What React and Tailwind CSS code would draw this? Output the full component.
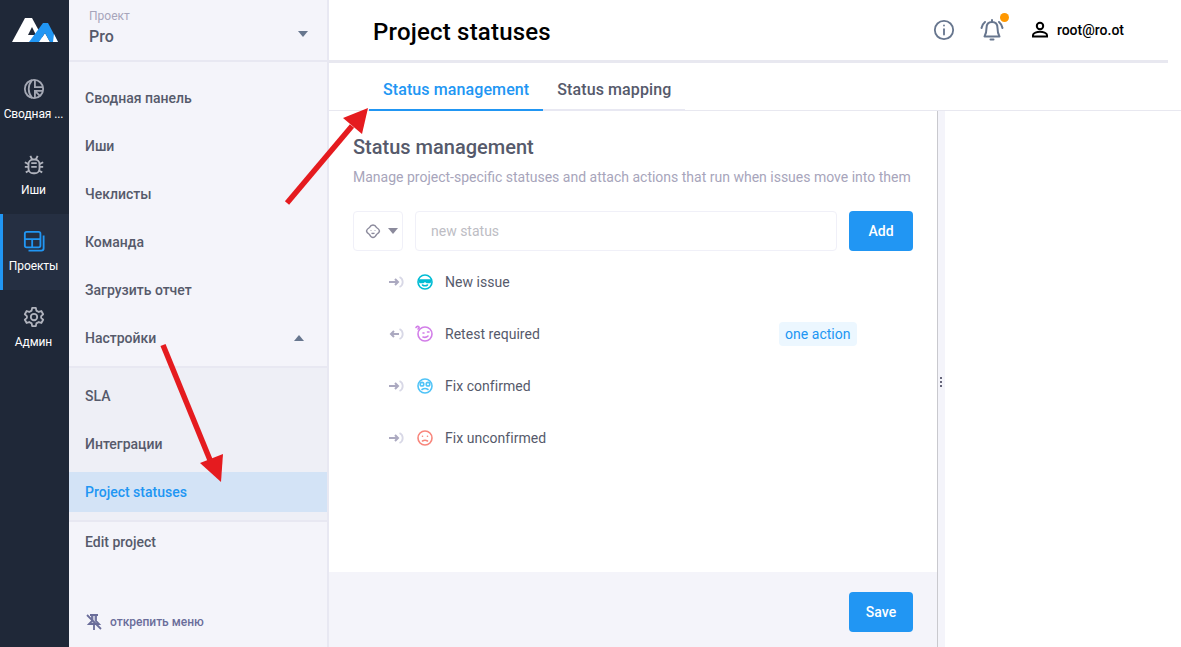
const font = { fontFamily: "Roboto, sans-serif" };

function Caret({ up, className }) {
  return (
    <svg width="10" height="6" viewBox="0 0 10 6" className={className}>
      <path d={up ? "M0 6 L5 0 L10 6 Z" : "M0 0 L10 0 L5 6 Z"} fill="currentColor" />
    </svg>
  );
}

function Logo() {
  return (
    <svg width="46" height="24" viewBox="0 0 46 24">
      <path d="M0 24 L13 0 H20 L33 24 Z" fill="#fff" />
      <path d="M20 9 L24 17 H16 Z" fill="#1f2838" />
      <path d="M27 24 L33 15 L38 24 Z" fill="#fff" />
      <path d="M17 24 L31 5 H36 L46 24 H38 L33 15 L27 24 Z" fill="#2196f3" />
      <path d="M42 16 L46 24 H41 Z" fill="#fff" />
    </svg>
  );
}

function RailItem({ icon, label, active }) {
  return (
    <div
      className={`h-[76px] flex flex-col items-center pt-[15px] border-l-[3px] ${
        active ? "border-[#2196f3] bg-[#252f42]" : "border-transparent"
      }`}
    >
      <div className="h-[24px] -ml-[5px] flex items-center justify-center">{icon}</div>
      <span className="-ml-[5px] mt-[3px] text-[12px] leading-[20px] text-white whitespace-nowrap tracking-[-0.1px]">{label}</span>
    </div>
  );
}

const DashIcon = (
  <svg width="22" height="22" viewBox="0 0 24 24" fill="none" stroke="#a4a8b4" strokeWidth="2">
    <circle cx="12" cy="12" r="10" />
    <path d="M10 2 C5 8 5 16 10 22" />
    <path d="M13 2 V10 H22 M13 22 V14 H22 M13 14 L19 20" />
  </svg>
);

const BugIcon = (
  <svg width="22" height="22" viewBox="0 0 24 24" fill="none" stroke="#b0b3bd" strokeWidth="2">
    <rect x="6" y="6" width="12" height="15" rx="5" />
    <path d="M9 10 H15 M9 14 H15 M8 2 L10 6 M16 2 L14 6 M2 9 L6 11 M22 9 L18 11 M2 14 H6 M22 14 H18 M3 20 L7 18 M21 20 L17 18" />
  </svg>
);

const ProjectIcon = (
  <svg width="22" height="22" viewBox="0 0 24 24" fill="none" stroke="#2196f3" strokeWidth="2">
    <rect x="2" y="2" width="17" height="17" rx="2" />
    <path d="M2 10 H19 M10 10 V19 M22.5 6 V20 a2.5 2.5 0 0 1 -2.5 2.5 H6" />
  </svg>
);

const GearIcon = (
  <svg width="22" height="22" viewBox="0 0 24 24" fill="none" stroke="#b0b3bd" strokeWidth="2" strokeLinejoin="round">
    <circle cx="12" cy="12" r="3.5" />
    <path d="M10 2 H14 L14.6 5 L17.2 6.5 L20 5.5 L22 9 L19.8 11 V13 L22 15 L20 18.5 L17.2 17.5 L14.6 19 L14 22 H10 L9.4 19 L6.8 17.5 L4 18.5 L2 15 L4.2 13 V11 L2 9 L4 5.5 L6.8 6.5 L9.4 5 Z" />
  </svg>
);

function SideItem({ label, active }) {
  return (
    <div className="h-[48px] py-[4px]">
      <div
        className={`h-full pl-[16px] flex items-center text-[14px] font-medium ${
          active ? "bg-[#d3e3f6] text-[#2196f3]" : "text-[#565a6b]"
        }`}
      >
        {label}
      </div>
    </div>
  );
}

function Face({ color, children }) {
  return (
    <svg width="16" height="16" viewBox="0 0 16 16" fill="none" stroke={color} strokeWidth="1.6" strokeLinecap="round" overflow="visible">
      <circle cx="8" cy="8" r="7" />
      {children}
    </svg>
  );
}

function InOut({ back }) {
  return (
    <svg width="16" height="12" viewBox="0 0 16 12" fill="none">
      <path d="M10.5 1 a5.5 5.5 0 0 1 0 10" stroke="#d8d8e6" strokeWidth="1.8" />
      {back ? (
        <path d="M2 6 H10 M5 3 L2 6 L5 9" stroke="#aba9c0" strokeWidth="2" />
      ) : (
        <path d="M0 6 H9 M6 3 L9 6 L6 9" stroke="#aba9c0" strokeWidth="2" />
      )}
    </svg>
  );
}

const statuses = [
  {
    name: "New issue",
    face: (
      <Face color="#00bcd4">
        <path d="M2 6 H14 L13 8.5 H10 L8 7 L6 8.5 H3 Z" fill="#00bcd4" />
        <path d="M5.5 11 Q8 12.5 10.5 11" />
      </Face>
    ),
  },
  {
    name: "Retest required",
    back: true,
    action: true,
    face: (
      <Face color="#d27ee8">
        <path d="M10.5 6 H12 M6 7 H7 M6 11 Q9 12 11 10" />
        <path d="M-1 1.5 Q0.5 -0.5 2 1 Q2.5 2.5 1 3" />
      </Face>
    ),
  },
  {
    name: "Fix confirmed",
    face: (
      <Face color="#4fc3f7">
        <circle cx="5" cy="6.2" r="1.8" />
        <circle cx="11" cy="6.2" r="1.8" />
        <path d="M5 11.5 Q8 9.5 11 11.5" />
      </Face>
    ),
  },
  {
    name: "Fix unconfirmed",
    face: (
      <Face color="#f8867c">
        <path d="M5.5 6.2 V6.3 M10.5 6.2 V6.3" />
        <path d="M5.5 11 Q8 9.5 10.5 11" />
      </Face>
    ),
  },
];

function StatusRow({ s }) {
  return (
    <div className="h-[52px] flex items-center">
      <div className="w-[28px] ml-[60px] flex items-center">
        <InOut back={s.back} />
      </div>
      <div className="w-[28px] flex items-center">{s.face}</div>
      <span className="text-[14px] text-[#565a6b] tracking-[0.03px]">{s.name}</span>
      {s.action && (
        <span className="absolute left-[450px] h-[24px] px-[6px] rounded-[4px] bg-[#ecf7ff] text-[#2196f3] text-[14px] leading-[24px] tracking-[0.03px]">
          one action
        </span>
      )}
    </div>
  );
}

export default function App() {
  return (
    <div className="relative w-[1181px] h-[647px] overflow-hidden bg-white flex" style={font}>
      {/* rail */}
      <div className="w-[69px] shrink-0 bg-[#1f2838] flex flex-col">
        <div className="h-[62px] pt-[18px] flex justify-center">
          <Logo />
        </div>
        <RailItem icon={DashIcon} label="Сводная ..." />
        <RailItem icon={BugIcon} label="Иши" />
        <RailItem icon={ProjectIcon} label="Проекты" active />
        <RailItem icon={GearIcon} label="Админ" />
      </div>

      {/* sidebar */}
      <div className="w-[260px] shrink-0 bg-[#f4f4fa] border-r-2 border-[#e8e8f2] flex flex-col">
        <div className="h-[62px] shrink-0 border-b-2 border-[#e8e8f2] pl-[20px] pr-[19px] pt-[8px] flex items-center justify-between">
          <div className="-mt-[10px]">
            <div className="text-[12px] leading-[14px] mb-[2px] text-[#a7a5bb]">Проект</div>
            <div className="text-[16px] leading-[24px] font-medium text-[#565a6b]">Pro</div>
          </div>
          <Caret className="text-[#67768e]" />
        </div>
        <div className="pt-[12px]">
          {["Сводная панель", "Иши", "Чеклисты", "Команда", "Загрузить отчет"].map((t) => (
            <SideItem key={t} label={t} />
          ))}
          <div className="relative">
            <SideItem label="Настройки" />
            <Caret up className="absolute right-[23px] top-[21px] text-[#67768e]" />
          </div>
        </div>
        <div className="mt-[4px] bg-[#eeeff6] border-t-2 border-b-2 border-[#e8e8f2] pt-[4px] pb-[4px]">
          <SideItem label="SLA" />
          <SideItem label="Интеграции" />
          <SideItem label="Project statuses" active />
        </div>
        <div className="-mt-[4px]">
          <SideItem label="Edit project" />
        </div>
        <div className="mt-auto h-[50px] pl-[16px] flex items-center gap-[7px] text-[12px] font-medium text-[#6a6d9a]">
          <svg width="18" height="18" viewBox="0 0 18 18" fill="none" stroke="#6a6d9a" strokeWidth="1.8">
            <path d="M5 2 H13 M7 2 V8 L4 11 H14 L11 8 V2 Z M9 11 V17" fill="#6a6d9a" fillOpacity="0.35" />
            <path d="M2 2 L16 16" />
          </svg>
          открепить меню
        </div>
      </div>

      {/* main */}
      <div className="flex-1 flex flex-col min-w-0">
        <div className="h-[63px] shrink-0 mr-[13px] border-b-[3px] border-[#e8e8f0] pl-[44px] pr-[44px] flex items-center justify-between">
          <h1 className="pt-[4px] text-[24px] font-medium text-black tracking-[0.2px]">Project statuses</h1>
          <div className="flex items-center">
            <svg width="22" height="22" viewBox="0 0 24 24" fill="none" stroke="#67768e" strokeWidth="2" strokeLinecap="round">
              <circle cx="12" cy="12" r="10" />
              <path d="M12 11 V17 M12 7 V7.1" />
            </svg>
            <div className="relative ml-[25px]">
              <svg width="24" height="24" viewBox="0 0 24 24" fill="none" stroke="#67768e" strokeWidth="2" strokeLinecap="round" strokeLinejoin="round">
                <path d="M12 4 C8 4 6.5 7 6.5 10 C6.5 14 6 16 4.5 18.5 H19.5 C18 16 17.5 14 17.5 10 C17.5 7 16 4 12 4 Z" />
                <path d="M10.5 21.5 H13.5 M12 2 V4" />
                <path d="M1.5 10 Q2 6.5 5 4 M22.5 10 Q22 6.5 19 4" />
              </svg>
              <span className="absolute -top-[5px] -right-[5px] w-[9px] h-[9px] rounded-full bg-[#ff9800]" />
            </div>
            <svg className="ml-[26px]" width="20" height="20" viewBox="0 0 20 20" fill="none" stroke="#000" strokeWidth="2">
              <circle cx="10" cy="6" r="3.2" />
              <path d="M3 16.5 V15 C3 13 7 11.8 10 11.8 S17 13 17 15 V16.5 Z" />
            </svg>
            <span className="ml-[7px] text-[14px] font-medium text-black">root@ro.ot</span>
          </div>
        </div>

        <div className="h-[48px] shrink-0 pl-[40px] border-b border-[#e8e8f0] flex">
          <div className="h-[48px] pt-[8px] px-[14px] flex items-center text-[16px] font-medium text-[#2196f3] border-b-2 border-[#2196f3] tracking-[0.1px]">
            Status management
          </div>
          <div className="h-[48px] pt-[8px] px-[14px] flex items-center text-[16px] font-medium text-[#565a6b] border-b-2 border-[#e8e8f2] tracking-[0.1px]">
            Status mapping
          </div>
        </div>

        <div className="flex-1 flex min-h-0">
          <div className="w-[609px] shrink-0 border-r border-[#c9c9ce] flex flex-col">
            <div className="flex-1 pt-[22px] px-[24px] relative">
              <h2 className="text-[20px] leading-[28px] font-medium text-[#565a6b]">Status management</h2>
              <p className="mt-[6px] text-[14px] leading-[20px] text-[#a7a5bb]">
                Manage project-specific statuses and attach actions that run when issues move into them
              </p>
              <div className="mt-[24px] flex items-center">
                <div className="w-[50px] h-[40px] border border-[#f0f0f8] rounded-[4px] pl-[11px] flex items-center gap-[7px]">
                  <svg width="16" height="16" viewBox="0 0 16 16" fill="none" stroke="#8b8a9c" strokeWidth="1.5">
                    <path d="M8 2 C10 2 11 3.5 11.5 4.5 C13 5.5 14.5 7 14.5 8 C14.5 9 13 10.5 11.5 11.5 C10.5 13.5 9.5 14.5 8 14.5 C6.5 14.5 5.5 13.5 4.5 11.5 C3 10.5 1.5 9 1.5 8 C1.5 7 3 5.5 4.5 4.5 C5 3.5 6 2 8 2 Z" />
                    <path d="M6 7 V7.5 M10 7 V7.5 M6.5 10 Q8 11 9.5 10" />
                  </svg>
                  <Caret className="text-[#8b8a9c]" />
                </div>
                <div className="ml-[12px] w-[422px] h-[40px] border border-[#f0f0f8] rounded-[4px] pl-[15px] flex items-center text-[14px] text-[#bdbdc4]">
                  new status
                </div>
                <button className="ml-[12px] w-[64px] h-[40px] rounded-[4px] bg-[#2196f3] text-white text-[14px] font-medium">
                  Add
                </button>
              </div>
              <div className="mt-[5px] -mx-[24px] relative">
                {statuses.map((s) => (
                  <StatusRow key={s.name} s={s} />
                ))}
              </div>
            </div>
            <div className="h-[75px] shrink-0 bg-[#f4f4fa] pr-[24px] pt-[20px] flex items-start justify-end">
              <button className="w-[64px] h-[40px] rounded-[4px] bg-[#2196f3] text-white text-[14px] font-medium">
                Save
              </button>
            </div>
          </div>
          <div className="w-[7px] shrink-0 bg-[#f4f4fa] flex flex-col items-center justify-center gap-[2px] pt-[6px] pr-[1px]">
            <span className="w-[2px] h-[2px] bg-[#66667a]" />
            <span className="w-[2px] h-[2px] bg-[#66667a]" />
            <span className="w-[2px] h-[2px] bg-[#66667a]" />
          </div>
        </div>
      </div>

      {/* annotation arrows */}
      <svg className="absolute inset-0 pointer-events-none" width="1181" height="647" viewBox="0 0 1181 647">
        <path d="M287 203 L352 126" stroke="#e51b1f" strokeWidth="5.5" />
        <path d="M368 108 L343 118 L362 134 Z" fill="#e51b1f" />
        <path d="M163 345 L210 460" stroke="#e51b1f" strokeWidth="5.5" />
        <path d="M221 482 L200 463 L223 454 Z" fill="#e51b1f" />
      </svg>
    </div>
  );
}
